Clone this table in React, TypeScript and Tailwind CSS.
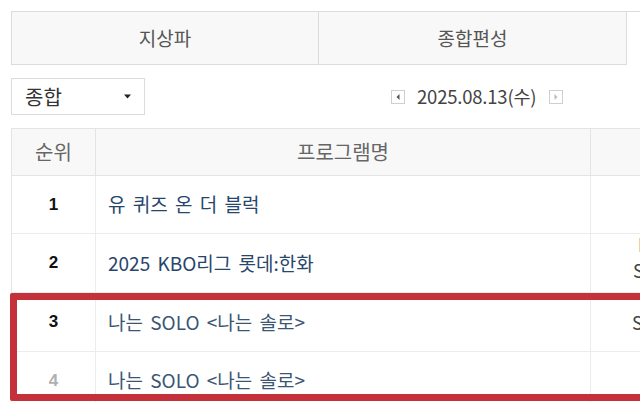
import React from "react";

const rows = [
  { rank: "1", name: "유 퀴즈 온 더 블럭", h: "h-[58px]", rankCls: "text-[#111]", nameCls: "text-[#27466b]", ch: [] as { t: string; pl: string }[], extra: "" },
  { rank: "2", name: "2025 KBO리그 롯데:한화", h: "h-[59px]", rankCls: "text-[#111]", nameCls: "text-[#27466b]", ch: [{ t: "KBS N", pl: "pl-[47px]" }, { t: "SPORTS", pl: "pl-[42px]" }], extra: "pb-[13px]" },
  { rank: "3", name: "나는 SOLO <나는 솔로>", h: "h-[59px]", rankCls: "text-[#111]", nameCls: "text-[#3b5673]", ch: [{ t: "SBS Plus", pl: "pl-[41px]" }], extra: "" },
  { rank: "4", name: "나는 SOLO <나는 솔로>", h: "h-[58px]", rankCls: "text-[#b0b0b0]", nameCls: "text-[#3b5673]", ch: [] as { t: string; pl: string }[], extra: "" },
];

function Arrow({ dir }: { dir: "l" | "r" }) {
  return (
    <div className="w-[14px] h-[14px] border border-[#cfcfcf] bg-white flex items-center justify-center">
      <svg width="6" height="8" viewBox="0 0 6 8">
        {dir === "l" ? (
          <polygon points="4.5,1 1.5,4 4.5,7" fill={"#555"} />
        ) : (
          <polygon points="1.5,1 4.5,4 1.5,7" fill={"#bbb"} />
        )}
      </svg>
    </div>
  );
}

export default function App() {
  return (
    <div className="w-[640px] h-[402px] bg-white relative overflow-hidden font-['Noto_Sans_CJK_KR','Noto_Sans',sans-serif]">
      <div className="w-[760px] pl-[11px] pt-[11px]">
        {/* Tabs */}
        <div className="flex h-[54px] text-[19px] text-[#555]">
          <div className="w-[308px] border border-[#dcdcdc] bg-[#f8f8f8] flex items-center justify-center">지상파</div>
          <div className="w-[308px] border-y border-r border-[#dcdcdc] bg-[#f8f8f8] flex items-center justify-center">종합편성</div>
          <div className="flex-1 border-t border-[#dcdcdc] bg-white" />
        </div>

        {/* Controls */}
        <div className="flex items-center mt-[13px] h-[37px]">
          <div className="w-[134px] h-[37px] border border-[#dcdcdc] flex items-center pl-[13px] pr-[13px] justify-between text-[20px] text-[#333]">
            <span>종합</span>
            <svg width="7" height="5" viewBox="0 0 7 5">
              <polygon points="0,0.5 7,0.5 3.5,4.5" fill="#222" />
            </svg>
          </div>
          <div className="ml-[246px] flex items-center">
            <Arrow dir="l" />
            <span className="ml-[12px] text-[18.5px] text-[#444] tracking-[-0.2px]">2025.08.13(수)</span>
            <div className="ml-[13px]">
              <Arrow dir="r" />
            </div>
          </div>
        </div>

        {/* Table */}
        <div className="mt-[13px] border-t border-l border-[#e4e4e4]">
          <div className="flex h-[47px] bg-[#f8f8f8] border-b border-[#e4e4e4] text-[20px] text-[#666]">
            <div className="w-[84px] border-r border-[#e4e4e4] flex items-center justify-center">순위</div>
            <div className="w-[495px] border-r border-[#e4e4e4] flex items-center justify-center">프로그램명</div>
            <div className="flex-1" />
          </div>
          {rows.map((r) => (
            <div key={r.rank} className={`flex ${r.h} border-b border-[#ececec]`}>
              <div className={`w-[84px] border-r border-[#ececec] flex items-center justify-center font-['Liberation_Sans',sans-serif] font-bold text-[17px] ${r.rankCls}`}>
                {r.rank}
              </div>
              <div className={`w-[495px] border-r border-[#ececec] flex items-center pl-[12px] text-[19px] [word-spacing:3px] ${r.nameCls}`}>
                {r.name}
              </div>
              <div className={`flex-1 flex flex-col justify-center text-[18px] text-[#444] leading-[26px] ${r.extra}`}>
                {r.ch.map((c) => (
                  <div key={c.t} className={c.pl}>{c.t}</div>
                ))}
              </div>
            </div>
          ))}
        </div>
      </div>

      {/* Highlight annotation */}
      <div className="absolute left-[10px] top-[293px] w-[700px] h-[108px] border-[7px] border-[#c4313b] rounded-[2px]" />
    </div>
  );
}
